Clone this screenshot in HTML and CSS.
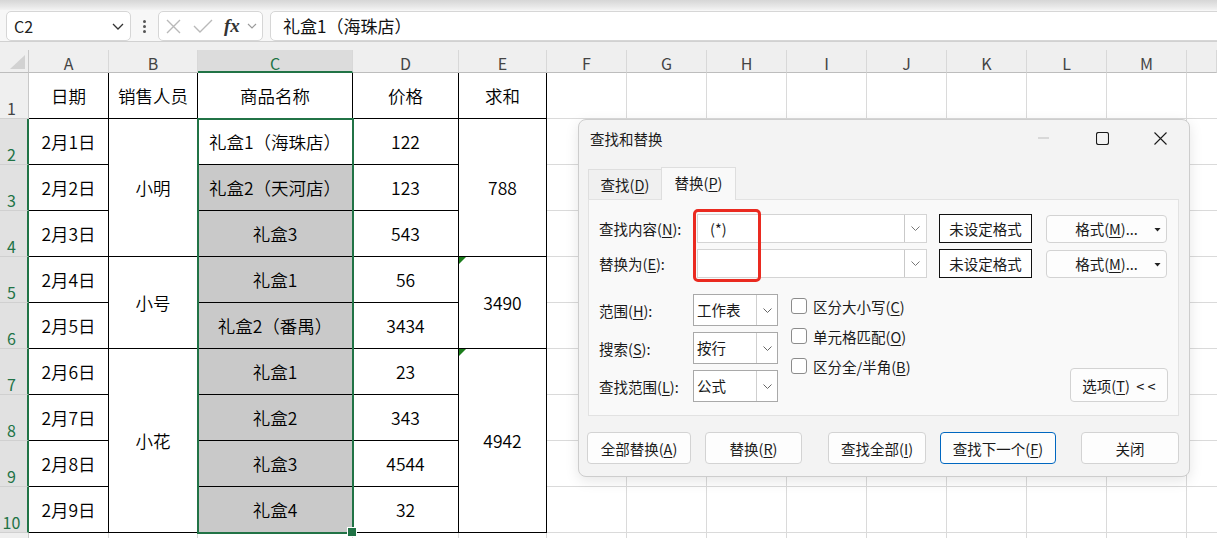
FILE: index.html
```html
<!DOCTYPE html>
<html lang="zh-CN">
<head>
<meta charset="utf-8">
<title>查找和替换</title>
<link rel="stylesheet" href="styles.css">
</head>
<body>
<div class="topstrip"></div>
<div class="fbar">
  <div class="namebox"><span>C2</span><svg width="12" height="7" viewBox="0 0 12 7"><path d="M1 1 L6 6 L11 1" fill="none" stroke="#333" stroke-width="1.3"/></svg></div>
  <div class="dots"><i></i><i></i><i></i></div>
  <div class="fxbox">
    <svg class="ic-x" width="15" height="15" viewBox="0 0 15 15"><path d="M1 1 L14 14 M14 1 L1 14" stroke="#b9b9b9" stroke-width="1.4" fill="none"/></svg>
    <svg class="ic-ok" width="20" height="14" viewBox="0 0 20 14"><path d="M1 7 L7 13 L19 1" stroke="#b9b9b9" stroke-width="1.4" fill="none"/></svg>
    <span class="fx">fx</span>
    <svg class="ic-dd" width="10" height="6" viewBox="0 0 10 6"><path d="M1 1 L5 5 L9 1" stroke="#9a9a9a" stroke-width="1.1" fill="none"/></svg>
  </div>
  <div class="formula">礼盒1（海珠店）</div>
</div>
<div class="band"></div>
<div class="sheet">
  <div class="empty"></div>
  <div class="corner"><i></i></div>
  <div class="ch">A</div><div class="ch">B</div><div class="ch cur">C</div><div class="ch">D</div><div class="ch">E</div>
  <div class="ch">F</div><div class="ch">G</div><div class="ch">H</div><div class="ch">I</div><div class="ch">J</div>
  <div class="ch">K</div><div class="ch">L</div><div class="ch">M</div><div class="ch"></div>

  <div class="rh">1</div><div class="c">日期</div><div class="c">销售人员</div><div class="c">商品名称</div><div class="c">价格</div><div class="c">求和</div>
  <div class="rh s">2</div><div class="c">2月1日</div><div class="c r3">小明</div><div class="c">礼盒1（海珠店）</div><div class="c">122</div><div class="c r3">788</div>
  <div class="rh s">3</div><div class="c">2月2日</div><div class="c g">礼盒2（天河店）</div><div class="c">123</div>
  <div class="rh s">4</div><div class="c">2月3日</div><div class="c g">礼盒3</div><div class="c">543</div>
  <div class="rh s">5</div><div class="c">2月4日</div><div class="c r2">小号</div><div class="c g">礼盒1</div><div class="c">56</div><div class="c r2 err">3490</div>
  <div class="rh s">6</div><div class="c">2月5日</div><div class="c g">礼盒2（番禺）</div><div class="c">3434</div>
  <div class="rh s">7</div><div class="c">2月6日</div><div class="c r4">小花</div><div class="c g">礼盒1</div><div class="c">23</div><div class="c r4 err">4942</div>
  <div class="rh s">8</div><div class="c">2月7日</div><div class="c g">礼盒2</div><div class="c">343</div>
  <div class="rh s">9</div><div class="c">2月8日</div><div class="c g">礼盒3</div><div class="c">4544</div>
  <div class="rh s">10</div><div class="c">2月9日</div><div class="c g">礼盒4</div><div class="c">32</div>
  <div class="rh"></div><div class="e"></div><div class="e"></div><div class="e"></div><div class="e"></div><div class="e"></div>
  <div class="selbox"></div>
</div>

<div class="dlg">
  <div class="dlg-title">
    <span class="dlg-name">查找和替换</span>
    <div class="wctl">
      <span class="wbtn"><svg width="12" height="2" viewBox="0 0 12 2"><path d="M0 1 H11" stroke="#bdbdbd" stroke-width="1"/></svg></span>
      <span class="wbtn"><svg width="13" height="13" viewBox="0 0 13 13"><rect x="0.5" y="0.5" width="12" height="12" rx="2" fill="none" stroke="#1a1a1a" stroke-width="1.1"/></svg></span>
      <span class="wbtn"><svg width="13" height="13" viewBox="0 0 13 13"><path d="M0.5 0.5 L12.5 12.5 M12.5 0.5 L0.5 12.5" stroke="#1a1a1a" stroke-width="1.1" fill="none"/></svg></span>
    </div>
  </div>
  <div class="tabs">
    <div class="tab">查找(<u>D</u>)</div>
    <div class="tab active">替换(<u>P</u>)</div>
  </div>
  <div class="panel">
    <div class="frow">
      <span class="flabel">查找内容(<u>N</u>):</span>
      <div class="combo"><span class="combo-text">(*)</span><span class="combo-btn"><svg width="9" height="5" viewBox="0 0 9 5"><path d="M0.5 0.5 L4.5 4.5 L8.5 0.5" stroke="#777" stroke-width="1" fill="none"/></svg></span></div>
      <div class="fmtbox">未设定格式</div>
      <div class="fmtbtn btn"><span>格式(<u>M</u>)...</span><i class="tri"></i></div>
    </div>
    <div class="frow second">
      <span class="flabel">替换为(<u>E</u>):</span>
      <div class="combo"><span class="combo-text"></span><span class="combo-btn"><svg width="9" height="5" viewBox="0 0 9 5"><path d="M0.5 0.5 L4.5 4.5 L8.5 0.5" stroke="#777" stroke-width="1" fill="none"/></svg></span></div>
      <div class="fmtbox">未设定格式</div>
      <div class="fmtbtn btn"><span>格式(<u>M</u>)...</span><i class="tri"></i></div>
    </div>
    <div class="opts">
      <div class="selcol">
        <div class="srow"><span class="slabel">范围(<u>H</u>):</span><div class="dd"><span class="dd-text">工作表</span><span class="dd-btn"><svg width="9" height="5" viewBox="0 0 9 5"><path d="M0.5 0.5 L4.5 4.5 L8.5 0.5" stroke="#666" stroke-width="1" fill="none"/></svg></span></div></div>
        <div class="srow"><span class="slabel">搜索(<u>S</u>):</span><div class="dd"><span class="dd-text">按行</span><span class="dd-btn"><svg width="9" height="5" viewBox="0 0 9 5"><path d="M0.5 0.5 L4.5 4.5 L8.5 0.5" stroke="#666" stroke-width="1" fill="none"/></svg></span></div></div>
        <div class="srow"><span class="slabel">查找范围(<u>L</u>):</span><div class="dd"><span class="dd-text">公式</span><span class="dd-btn"><svg width="9" height="5" viewBox="0 0 9 5"><path d="M0.5 0.5 L4.5 4.5 L8.5 0.5" stroke="#666" stroke-width="1" fill="none"/></svg></span></div></div>
      </div>
      <div class="chkcol">
        <div class="chk"><i class="box"></i><span>区分大小写(<u>C</u>)</span></div>
        <div class="chk"><i class="box"></i><span>单元格匹配(<u>O</u>)</span></div>
        <div class="chk"><i class="box"></i><span>区分全/半角(<u>B</u>)</span></div>
      </div>
      <div class="optbtn btn">选项(<u>T</u>)&nbsp; &lt; &lt;</div>
    </div>
    <div class="hl"></div>
  </div>
  <div class="actions">
    <div class="btn a1">全部替换(<u>A</u>)</div>
    <div class="btn a2">替换(<u>R</u>)</div>
    <div class="btn a3">查找全部(<u>I</u>)</div>
    <div class="btn a4 primary">查找下一个(<u>F</u>)</div>
    <div class="btn a5">关闭</div>
  </div>
</div>
</body>
</html>
```

FILE: styles.css
```css
* { box-sizing: border-box; }
html, body { margin: 0; padding: 0; }
body {
  width: 1217px;
  height: 538px;
  overflow: hidden;
  position: relative;
  background: #fff;
  font-family: "Noto Sans CJK SC", "Noto Sans", sans-serif;
  color: #000;
}

/* ---------- top / formula bar ---------- */
.topstrip {
  height: 10px;
  background: linear-gradient(#d6d6d6, #e9e9e9 70%, #f3f3f3);
}
.fbar {
  height: 32px;
  display: flex;
  align-items: flex-start;
  padding-top: 1px;
  background: #f7f7f7;
  border-bottom: 1px solid #d1d1d1;
  overflow: hidden;
}
.namebox {
  margin-left: 6px;
  width: 125px;
  height: 30px;
  background: #fff;
  border: 1px solid #d6d6d6;
  border-radius: 5px;
  display: flex;
  align-items: center;
  justify-content: space-between;
  padding: 0 6px 0 7px;
  font-size: 16px;
  color: #222;
}
.dots {
  width: 27px;
  height: 30px;
  display: flex;
  flex-direction: column;
  align-items: center;
  gap: 2px;
  padding-top: 9px;
}
.dots i { width: 3px; height: 3px; background: #555; border-radius: 50%; }
.fxbox {
  width: 105px;
  height: 30px;
  background: #fff;
  border: 1px solid #d6d6d6;
  border-radius: 5px;
  display: flex;
  align-items: center;
  padding-left: 7px;
}
.ic-ok { margin-left: 12px; }
.fx {
  margin-left: 11px;
  font-family: "Liberation Serif", serif;
  font-style: italic;
  font-weight: bold;
  font-size: 19px;
  line-height: 20px;
  color: #333;
}
.ic-dd { margin-left: 7px; }
.formula {
  margin-left: 7px;
  flex: 1;
  margin-right: -10px;
  height: 30px;
  background: #fff;
  border: 1px solid #d6d6d6;
  border-radius: 5px;
  padding-left: 12px;
  font-size: 17px;
  line-height: 28px;
  color: #111;
}
.band { height: 8px; background: #efefef; }

/* ---------- sheet grid ---------- */
.sheet {
  display: grid;
  grid-template-columns: 29px 80px 89px 155px 106px 88px repeat(8, 80px) 1fr;
  grid-template-rows: 23px repeat(11, 46px);
  position: relative;
}
.corner {
  background: #efefef;
  border-right: 1px solid #c8c8c8;
  border-bottom: 1px solid #bdbdbd;
  display: flex;
  align-items: flex-end;
  justify-content: flex-end;
  padding: 0 3px 3px 0;
}
.corner i {
  width: 15px;
  height: 14px;
  background: #d2d2d2;
  clip-path: polygon(100% 0, 100% 100%, 0 100%);
}
.ch {
  background: #efefef;
  border-right: 1px solid #d8d8d8;
  border-bottom: 1px solid #bdbdbd;
  display: flex;
  align-items: center;
  justify-content: center;
  padding-top: 3px;
  font-size: 16px;
  color: #444;
}
.ch.cur {
  background: #dcdcdc;
  border-bottom: 2px solid #217346;
  color: #217346;
  padding-top: 4px;
}
.rh {
  background: #efefef;
  border-right: 1px solid #c8c8c8;
  border-bottom: 1px solid #d0d0d0;
  display: flex;
  align-items: flex-end;
  justify-content: center;
  padding: 0 5px 1px 0;
  font-size: 16px;
  line-height: 18px;
  color: #444;
}
.rh.s {
  background: #e1e1e1;
  border-right: 2px solid #217346;
  color: #217346;
  padding-right: 4px;
}
.c {
  position: relative;
  background: #fff;
  border-right: 1px solid #000;
  border-bottom: 1px solid #000;
  display: flex;
  align-items: center;
  justify-content: center;
  font-size: 17.5px;
  font-weight: 350;
  white-space: nowrap;
  color: #000;
}
.c.g { background: #c9c9c9; }
.r2 { grid-row: span 2; }
.r3 { grid-row: span 3; }
.r4 { grid-row: span 4; }
.err::before {
  content: "";
  position: absolute;
  left: 0;
  top: 0;
  width: 7px;
  height: 7px;
  background: #1b7d1b;
  clip-path: polygon(0 0, 100% 0, 0 100%);
}
.e {
  background: #fff;
  border-right: 1px solid #dadada;
  border-bottom: 1px solid #dadada;
}
.empty {
  grid-column: 7 / -1;
  grid-row: 2 / -1;
  background-color: #fff;
  background-image:
    linear-gradient(to right, transparent 79px, #dadada 79px),
    linear-gradient(to bottom, transparent 45px, #dadada 45px);
  background-size: 80px 46px;
}
.selbox {
  grid-column: 4 / 5;
  grid-row: 3 / 12;
  position: absolute;
  inset: -1px;
  border: 2px solid #217346;
  pointer-events: none;
}
.selbox::after {
  content: "";
  position: absolute;
  right: -5px;
  bottom: -5px;
  width: 8px;
  height: 8px;
  background: #217346;
  border: 1px solid #fff;
}

/* ---------- dialog ---------- */
.dlg {
  position: absolute;
  left: 578px;
  top: 119px;
  width: 612px;
  height: 358px;
  background: #f3f3f3;
  border: 1px solid #cdcdcd;
  border-radius: 8px;
  box-shadow: 0 4px 14px rgba(0, 0, 0, 0.10);
  font-size: 14.5px;
  color: #1a1a1a;
  display: flex;
  flex-direction: column;
}
.dlg u { text-underline-offset: 2px; text-decoration-thickness: 1px; }
.dlg-title {
  height: 36px;
  display: flex;
  align-items: center;
  padding-left: 11px;
}
.dlg-name { font-size: 14.5px; }
.wctl { margin-left: auto; display: flex; }
.wbtn {
  width: 58px;
  height: 36px;
  display: flex;
  align-items: center;
  justify-content: center;
}
.tabs {
  margin-top: 11px;
  height: 32px;
  display: flex;
  align-items: flex-end;
  padding-left: 9px;
  position: relative;
  z-index: 1;
}
.tab {
  width: 73px;
  height: 30px;
  display: flex;
  align-items: center;
  justify-content: center;
  background: #f0f0f0;
  border: 1px solid #dedede;
  border-bottom: none;
  border-right: none;
  padding-bottom: 1px;
}
.tab.active {
  width: 75px;
  height: 33px;
  margin-bottom: -1px;
  background: #f9f9f9;
  border-right: 1px solid #dedede;
  padding-bottom: 3px;
}
.panel {
  position: relative;
  margin: 0 10px 0 9px;
  height: 217px;
  background: #f9f9f9;
  border: 1px solid #e2e2e2;
  padding: 14px 10px 0 10px;
}
.frow { display: flex; align-items: center; height: 29px; }
.frow.second { margin-top: 6px; }
.flabel { width: 98px; }
.combo {
  width: 230px;
  height: 29px;
  background: #fff;
  border: 1px solid #d4d4d4;
  display: flex;
}
.combo-text { flex: 1; padding-left: 12px; line-height: 27px; }
.combo-btn {
  width: 22px;
  border-left: 1px solid #c9c9c9;
  display: flex;
  align-items: center;
  justify-content: center;
}
.fmtbox {
  margin-left: 12px;
  width: 93px;
  height: 29px;
  background: #fff;
  border: 1px solid #111;
  display: flex;
  align-items: center;
  justify-content: center;
}
.btn {
  background: #fdfdfd;
  border: 1px solid #d3d3d3;
  border-radius: 4px;
  display: flex;
  align-items: center;
  justify-content: center;
}
.fmtbtn {
  margin-left: 14px;
  width: 121px;
  height: 28px;
  position: relative;
}
.tri {
  position: absolute;
  right: 5px;
  top: 12px;
  width: 7px;
  height: 4px;
  background: #222;
  clip-path: polygon(0 0, 100% 0, 50% 100%);
}
.opts {
  margin-top: 16px;
  display: flex;
  align-items: flex-start;
}
.selcol { display: flex; flex-direction: column; gap: 6px; }
.srow { display: flex; align-items: center; height: 32px; }
.slabel { width: 94px; }
.dd {
  width: 85px;
  height: 32px;
  background: #fff;
  border: 1px solid #a9a9a9;
  display: flex;
}
.dd-text { flex: 1; padding-left: 3px; line-height: 30px; }
.dd-btn {
  width: 21px;
  border-left: 1px solid #cfcfcf;
  display: flex;
  align-items: center;
  justify-content: center;
}
.chkcol {
  margin-left: 13px;
  padding-top: 4px;
  display: flex;
  flex-direction: column;
  gap: 14px;
}
.chk { height: 16px; display: flex; align-items: center; gap: 6px; white-space: nowrap; }
.box {
  width: 16px;
  height: 16px;
  background: #fff;
  border: 1px solid #8c8c8c;
  border-radius: 3px;
}
.optbtn {
  margin-left: auto;
  margin-top: 74px;
  width: 98px;
  height: 34px;
}
.hl {
  position: absolute;
  left: 104px;
  top: 9px;
  width: 68px;
  height: 73px;
  border: 3px solid #ea2a20;
  border-radius: 5px;
}
.actions {
  margin-top: 16px;
  padding-left: 8px;
  display: flex;
  height: 32px;
}
.actions .btn { height: 32px; }
.a1 { width: 104px; }
.a2 { width: 97px; margin-left: 14px; }
.a3 { width: 98px; margin-left: 26px; }
.a4 { width: 116px; margin-left: 14px; }
.a5 { width: 98px; margin-left: 25px; }
.btn.primary { border-color: #0067c0; }
```
